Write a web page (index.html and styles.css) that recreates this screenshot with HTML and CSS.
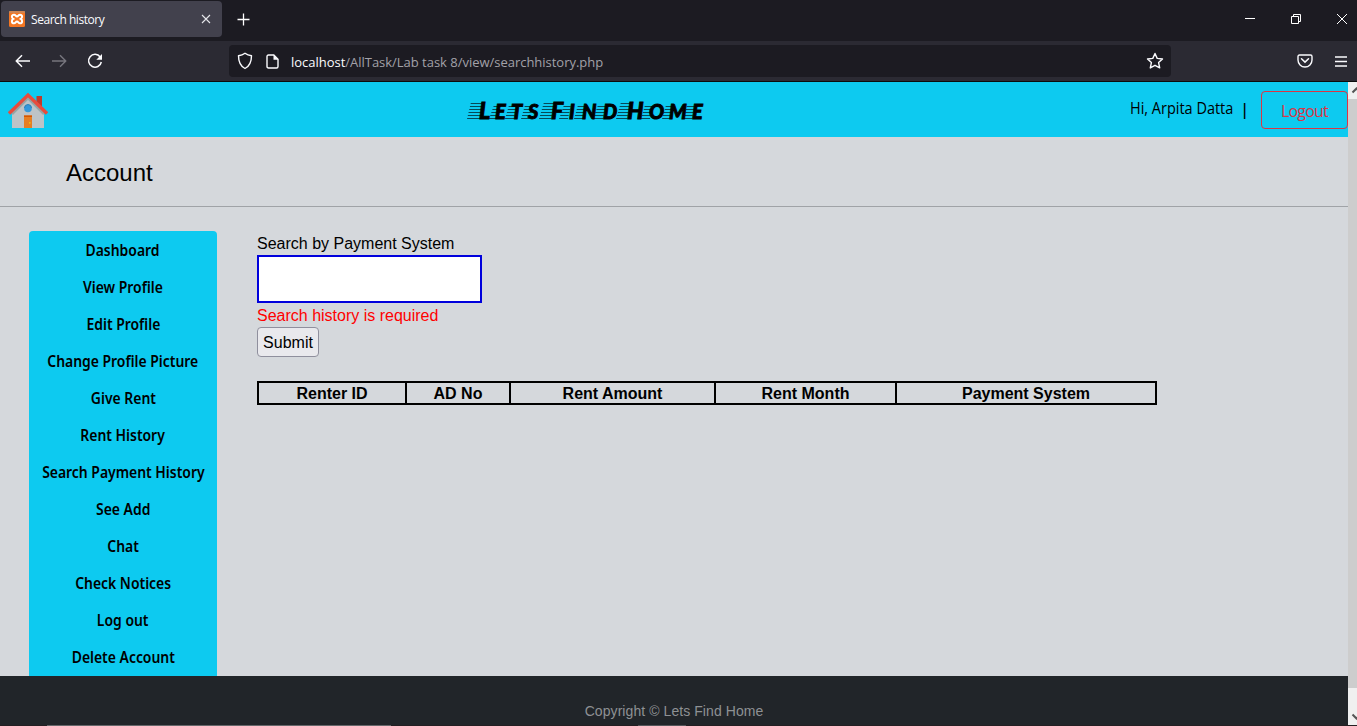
FILE: index.html
```html
<!DOCTYPE html>
<html lang="en">
<head>
<meta charset="utf-8">
<title>Search history</title>
<link rel="stylesheet" href="styles.css">
</head>
<body>
<div class="browser">
  <div class="tabbar">
    <div class="tab">
      <svg class="favicon" width="16" height="16" viewBox="0 0 16 16"><rect width="16" height="16" rx="1.5" fill="#f37623"/><path d="M0 1h16" stroke="#c58b62" stroke-width="1.5"/><path d="M5 3.7c-2.6 0-2.7 3.1-.8 4.2-1.9 1.1-1.8 4.4.8 4.4 1.7 0 1.6-1.8 3-1.8s1.3 1.8 3 1.8c2.6 0 2.7-3.3.8-4.4 1.9-1.1 1.8-4.2-.8-4.2-1.7 0-1.6 1.9-3 1.9S6.700 3.700 5 3.700z" fill="none" stroke="#fff" stroke-width="2"/></svg>
      <span class="tab-title">Search history</span>
      <svg width="10" height="10" viewBox="0 0 10 10"><path d="M1 1l8 8M9 1L1 9" stroke="#e6e6ea" stroke-width="1.1"/></svg>
    </div>
    <svg class="newtab" width="13" height="13" viewBox="0 0 13 13"><path d="M6.500 .5v12M.5 6.500h12" stroke="#fff" stroke-width="1.3"/></svg>
    <div class="window-buttons">
      <svg width="10" height="12" viewBox="0 0 10 12"><path d="M0 5.500h10" stroke="#fff"/></svg>
      <svg width="10" height="10" viewBox="0 0 10 10"><path d="M.5 2.500h7v7h-7zM2.500 2.500v-2h7v7h-2" fill="none" stroke="#fff"/></svg>
      <svg width="10" height="10" viewBox="0 0 10 10"><path d="M0 0l10 10M10 0L0 10" stroke="#fff"/></svg>
    </div>
  </div>
  <div class="toolbar">
    <div class="nav-buttons">
      <svg width="16" height="14" viewBox="0 0 16 14"><path d="M15 7H1.500M7 1.200L1.200 7 7 12.800" fill="none" stroke="#fbfbfe" stroke-width="1.5" stroke-linejoin="round"/></svg>
      <svg width="16" height="14" viewBox="0 0 16 14"><path d="M1 7h13.500M9 1.200L14.800 7 9 12.800" fill="none" stroke="#77767e" stroke-width="1.400" stroke-linejoin="round"/></svg>
      <svg width="16" height="16" viewBox="0 0 16 16"><path d="M13.200 4A6.400 6.400 0 1 0 14.300 9" fill="none" stroke="#fbfbfe" stroke-width="1.500"/><path d="M15 1v5.700H9.300z" fill="#fbfbfe"/></svg>
    </div>
    <div class="urlbar">
      <svg width="16" height="18" viewBox="0 0 16 18"><path d="M8 1.200c2 1.500 4 2.200 6.500 2.500 0 6.200-1.600 10.200-6.500 12.800C3.100 13.900 1.500 9.900 1.500 3.700 4 3.400 6 2.700 8 1.200z" fill="none" stroke="#fbfbfe" stroke-width="1.400" stroke-linejoin="round"/></svg>
      <svg width="13" height="15" viewBox="0 0 13 15"><path d="M2.500 1h5.300l4.200 4.200v7.300q0 1.500-1.500 1.500h-8Q1 14 1 12.500v-10Q1 1 2.500 1z" fill="none" stroke="#fbfbfe" stroke-width="1.400"/><path d="M7.500 .8v4.900h4.800z" fill="#fbfbfe"/></svg>
      <span class="url"><b>localhost</b>/AllTask/Lab task 8/view/searchhistory.php</span>
      <svg width="18" height="18" viewBox="0 0 18 18"><path d="M9 1.500l2.200 4.900 5.300.6-3.900 3.600 1.100 5.300L9 13.300l-4.700 2.600 1.100-5.300L1.500 7l5.300-.6z" fill="none" stroke="#fbfbfe" stroke-width="1.400" stroke-linejoin="round"/></svg>
    </div>
    <div class="tools">
      <svg width="16" height="14" viewBox="0 0 16 14"><path d="M2.500 1h11q1.500 0 1.500 1.500V6A7 7 0 0 1 1 6V2.500Q1 1 2.500 1z" fill="none" stroke="#fbfbfe" stroke-width="1.400"/><path d="M4.500 4.800L8 8.100l3.500-3.300" fill="none" stroke="#fbfbfe" stroke-width="1.500" stroke-linecap="round"/></svg>
      <svg width="12" height="11" viewBox="0 0 12 11"><path d="M0 1h12M0 5.500h12M0 10h12" stroke="#fbfbfe" stroke-width="1.300"/></svg>
    </div>
  </div>

  <div class="viewport">
    <div class="page">
      <header class="site-header">
        <svg class="home" width="40" height="40" viewBox="0 0 40 40">
          <path d="M28.500 5H34v15h-5.500z" fill="#c0392b"/>
          <path d="M4 20L20 5l16 15v17H4z" fill="#bdc3c7"/>
          <path d="M4 23L20 7l16 16" fill="none" stroke="#95a5a6" stroke-width="2.500"/>
          <path d="M1 22.500L20 4l19 18.500" fill="none" stroke="#e74c3c" stroke-width="3.400"/>
          <circle cx="20" cy="17.500" r="3.800" fill="#3498db"/><path d="M16.500 17a3.500 3.500 0 0 1 7 0" fill="none" stroke="#2980b9"/>
          <path d="M16 24.500h8V37h-8z" fill="#e67e22"/><path d="M16 25.200h8" stroke="#d35400" stroke-width="1.500"/><circle cx="21.800" cy="31.800" r=".9" fill="#f1c40f"/>
        </svg>
        <svg class="logo" width="240" height="24" viewBox="0 0 240 24">
          <defs><pattern id="speed" width="300" height="3" patternUnits="userSpaceOnUse"><path d="M0 1.500h300" stroke="#04323d" stroke-opacity=".85"/></pattern></defs>
          <path d="M4 3h14l-4 17H0zM27 6h7l-3 14h-9zM42 6h8l-3 14h-9zM58 6h8l-4 14h-8zM77 3h11l-4 17H72zM97 6h7l-3 14h-9zM111 6h8l-3 14h-9zM131 6h8l-3 14h-10zM154 3h10l-4 17h-11zM178 6h8l-3 14h-9zM199 6h8l-3 14h-9zM220 6h8l-3 14h-8z" fill="url(#speed)"/>
          <text class="logo-text" y="20" x="12 28 44 61 75 84 102 115 136 152 160 182 202 225"><tspan class="cap">L</tspan>ETS <tspan class="cap">F</tspan>IND <tspan class="cap">H</tspan>OME</text>
        </svg>
        <div class="user"><span class="greeting">Hi, Arpita Datta</span><span class="bar">|</span><a class="logout">Logout</a></div>
      </header>
      <div class="account">Account</div>
      <div class="content">
        <nav class="menu">
          <a>Dashboard</a><a>View Profile</a><a>Edit Profile</a><a>Change Profile Picture</a><a>Give Rent</a><a>Rent History</a><a>Search Payment History</a><a>See Add</a><a>Chat</a><a>Check Notices</a><a>Log out</a><a>Delete Account</a>
        </nav>
        <main class="main">
          <label class="field-label" for="q">Search by Payment System</label>
          <input class="field" id="q" type="text">
          <div class="error">Search history is required</div>
          <button class="submit">Submit</button>
          <table class="results">
            <colgroup><col class="c1"><col class="c2"><col class="c3"><col class="c4"><col class="c5"></colgroup>
            <tr><th>Renter ID</th><th>AD No</th><th>Rent Amount</th><th>Rent Month</th><th>Payment System</th></tr>
          </table>
        </main>
      </div>
      <footer class="footer">Copyright © Lets Find Home</footer>
    </div>
    <div class="scrollbar">
      <svg width="9" height="17" viewBox="0 0 9 17"><path d="M4.500 10.500l4-4 4 4" fill="none" stroke="#555" stroke-width="2"/></svg>
      <div class="thumb"></div>
      <svg class="down" width="9" height="37" viewBox="0 0 9 37"><path d="M4.500 26.500l4 4 4-4" fill="none" stroke="#555" stroke-width="2"/></svg>
    </div>
  </div>
  <div class="edge"><i class="e1"></i><i class="e2"></i></div>
</div>
</body>
</html>
```
FILE: styles.css
```css
* { box-sizing: border-box; }
body { margin: 0; overflow: hidden; }
svg { display: block; flex: none; }
.browser { width: 1357px; height: 726px; display: flex; flex-direction: column; font-family: "Liberation Sans", Arial, sans-serif; overflow: hidden; }
.tabbar { height: 41px; flex: none; background: #1c1b22; display: flex; padding: 1px 10px 0 1px; }
.tab { width: 221px; height: 36px; border-radius: 4px; background: #42414d; color: #fbfbfe; display: flex; align-items: center; padding: 0 11px 0 8px; }
.tab-title { font: 12px "Open Sans", sans-serif; letter-spacing: -.45px; margin-left: 6px; flex: 1; }
.newtab { margin: 12px 0 0 15px; }
.window-buttons { margin-left: auto; display: flex; align-items: center; gap: 36px; height: 36px; }
.toolbar { height: 41px; flex: none; background: #2b2a33; border-bottom: 1px solid #0c0c0d; display: flex; align-items: center; padding: 0 10px 0 15px; }
.nav-buttons { width: 214px; display: flex; align-items: center; gap: 20px; }
.urlbar { width: 942px; height: 32px; border-radius: 4px; background: #1c1b22; display: flex; align-items: center; padding: 0 7px 0 8px; }
.urlbar svg + svg { margin-left: 13px; }
.url { flex: 1; margin-left: 12px; color: #a2a1a8; font: 13px "Open Sans", sans-serif; letter-spacing: -.02px; padding-top: 2px; }
.url b { font-weight: 400; color: #fbfbfe; }
.tools { margin-left: auto; display: flex; align-items: center; gap: 22px; }
.viewport { height: 643px; flex: none; display: flex; }
.page { width: 1348px; background: #d5d8dc; display: flex; flex-direction: column; }
.site-header { height: 55px; flex: none; background: #0dcaf0; display: flex; align-items: center; padding-left: 8px; }
.home { margin-top: 2px; }
.logo { margin-left: 419px; margin-top: 2px; overflow: visible; }
.logo-text { font: italic 900 20px Lato, sans-serif; stroke: #000; stroke-width: .9px; }
.cap { font-size: 23px; }
.user { margin-left: auto; display: flex; align-items: center; font-family: "Open Sans", sans-serif; }
.greeting { width: 103px; padding-bottom: 3px; font-size: 16px; white-space: nowrap; transform: scaleX(.905); transform-origin: left; }
.bar { font-size: 16px; font-weight: 600; margin: 0 12px 0 7px; padding-bottom: 2px; }
.logout { width: 87px; height: 38px; border: 1px solid #dc3545; border-radius: 4px; color: #dc3545; font: 16px/38px "Open Sans", sans-serif; letter-spacing: -.8px; text-align: center; }
.account { height: 70px; flex: none; border-bottom: 1px solid #a0a3a7; padding-left: 66px; font-size: 24px; line-height: 72px; }
.content { height: 469px; flex: none; display: flex; padding: 24px 0 0 29px; }
.menu { width: 188px; background: #0dcaf0; border-radius: 4px 4px 0 0; display: flex; flex-direction: column; align-items: center; }
.menu a { height: 37px; flex: none; font: 600 16px/38px "Noto Sans", "Open Sans", sans-serif; white-space: nowrap; transform: scaleX(.87); }
.main { margin-left: 40px; font-size: 16px; line-height: 24px; }
.field-label { display: block; height: 24px; padding-top: 1px; }
.field { display: block; width: 225px; height: 48px; border: 2px solid #0000dc; background: #fff; outline: 0; }
.error { height: 24px; padding-top: 1px; color: #f00; }
.submit { display: block; width: 62px; height: 30px; padding: 2px 0 0; border: 1px solid #8f8f9d; border-radius: 4px; background: #e9e9ed; font: 16px "Liberation Sans", sans-serif; }
.results { width: 900px; margin-top: 24px; border-collapse: collapse; table-layout: fixed; }
.results th { height: 22px; border: 2px solid #000; padding: 2px 0 0; line-height: 18px; }
.c1 { width: 148px; } .c2 { width: 104px; } .c3 { width: 205px; } .c4 { width: 181px; } .c5 { width: 260px; }
.footer { height: 49px; background: #212529; color: #8e9194; text-align: center; font-size: 14px; line-height: 70px; letter-spacing: .07px; }
.scrollbar { width: 9px; display: flex; flex-direction: column; background: #f0f0f0; }
.thumb { flex: 1; background: #cdcdcd; }
.edge { height: 1px; background: #241f22; display: flex; }
.e1 { width: 344px; margin-left: 47px; background: #66676a; }
.e2 { width: 48px; margin-left: 247px; background: #55565a; }
```
